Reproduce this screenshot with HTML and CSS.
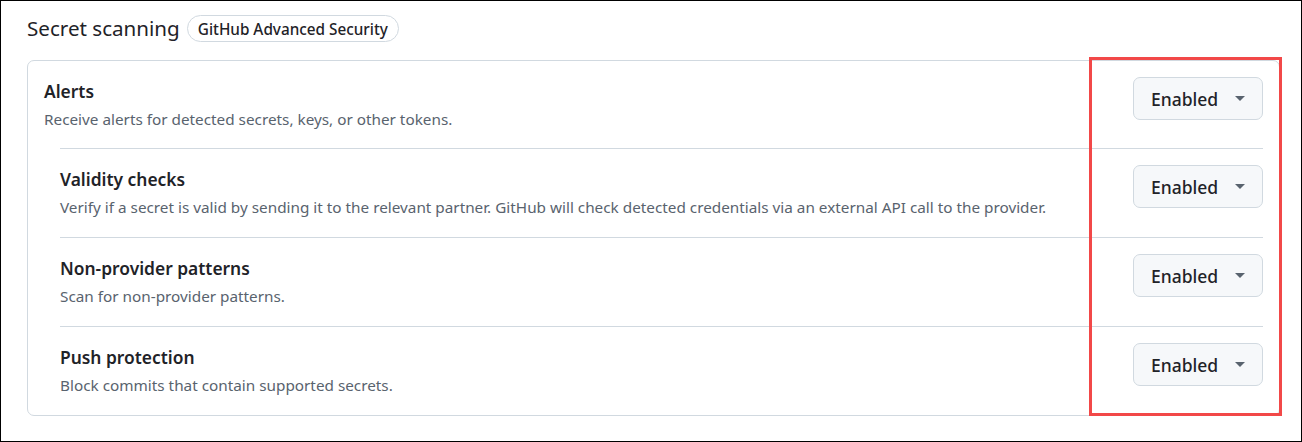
FILE: index.html
```html
<!DOCTYPE html>
<html lang="en">
<head>
<meta charset="utf-8">
<title>Secret scanning</title>
<link rel="stylesheet" href="styles.css">
</head>
<body>
<div class="frame">
  <div class="header">
    <h2 class="title">Secret scanning</h2>
    <span class="badge">GitHub Advanced Security</span>
  </div>
  <div class="box">
    <div class="row">
      <div class="text">
        <div class="row-title">Alerts</div>
        <div class="row-desc">Receive alerts for detected secrets, keys, or other tokens.</div>
      </div>
      <button class="btn">Enabled <span class="caret"></span></button>
    </div>
    <div class="nested">
      <div class="row sub">
        <div class="text">
          <div class="row-title">Validity checks</div>
          <div class="row-desc">Verify if a secret is valid by sending it to the relevant partner. GitHub will check detected credentials via an external API call to the provider.</div>
        </div>
        <button class="btn">Enabled <span class="caret"></span></button>
      </div>
      <div class="row sub">
        <div class="text">
          <div class="row-title">Non-provider patterns</div>
          <div class="row-desc">Scan for non-provider patterns.</div>
        </div>
        <button class="btn">Enabled <span class="caret"></span></button>
      </div>
      <div class="row sub">
        <div class="text">
          <div class="row-title">Push protection</div>
          <div class="row-desc">Block commits that contain supported secrets.</div>
        </div>
        <button class="btn">Enabled <span class="caret"></span></button>
      </div>
    </div>
  </div>
  <div class="highlight"></div>
</div>
</body>
</html>
```
FILE: styles.css
```css
* { box-sizing: border-box; }
html, body { margin: 0; padding: 0; background: #ffffff; }
body {
  font-family: "Noto Sans", "Open Sans", sans-serif;
  color: #1f2328;
}
.frame {
  position: relative;
  width: 1302px;
  height: 442px;
  border: 1px solid #000000;
  padding: 11px 21px 0 26px;
}
.header {
  display: flex;
  align-items: center;
  gap: 7px;
  height: 33px;
}
.title {
  margin: 0;
  font-size: 20.6px;
  font-weight: 400;
  line-height: 33px;
  color: #1f2328;
}
.badge {
  display: inline-flex;
  align-items: center;
  height: 27px;
  padding: 0 10px;
  border: 1px solid #d1d9e0;
  border-radius: 14px;
  font-size: 15.3px;
  font-weight: 500;
  color: #1f2328;
}
.box {
  margin-top: 15px;
  border: 1px solid #d1d9e0;
  border-radius: 7px;
  padding: 0 16px;
}
.row {
  display: flex;
  align-items: flex-start;
  justify-content: space-between;
  padding: 16px 0;
  min-height: 87px;
}
.nested { margin-left: 16px; }
.sub {
  border-top: 1px solid #d1d9e0;
  min-height: 89px;
}
.row-title {
  font-size: 17.4px;
  font-weight: 600;
  line-height: 28px;
  color: #1f2328;
}
.row-desc {
  margin-top: 3px;
  font-size: 15.3px;
  line-height: 23px;
  color: #59636e;
}
.btn {
  display: inline-flex;
  align-items: center;
  justify-content: space-between;
  flex: none;
  width: 130px;
  height: 43px;
  padding: 0 17px 0 17px;
  background: #f6f8fa;
  border: 1px solid #d1d9e0;
  border-radius: 7px;
  font-family: inherit;
  font-size: 17.5px;
  font-weight: 500;
  color: #1f2328;
}
.caret {
  width: 0;
  height: 0;
  border-left: 5px solid transparent;
  border-right: 5px solid transparent;
  border-top: 5px solid #59636e;
}
.highlight {
  position: absolute;
  left: 1088px;
  top: 56px;
  width: 193px;
  height: 359px;
  border: 3px solid #f24848;
}
```
